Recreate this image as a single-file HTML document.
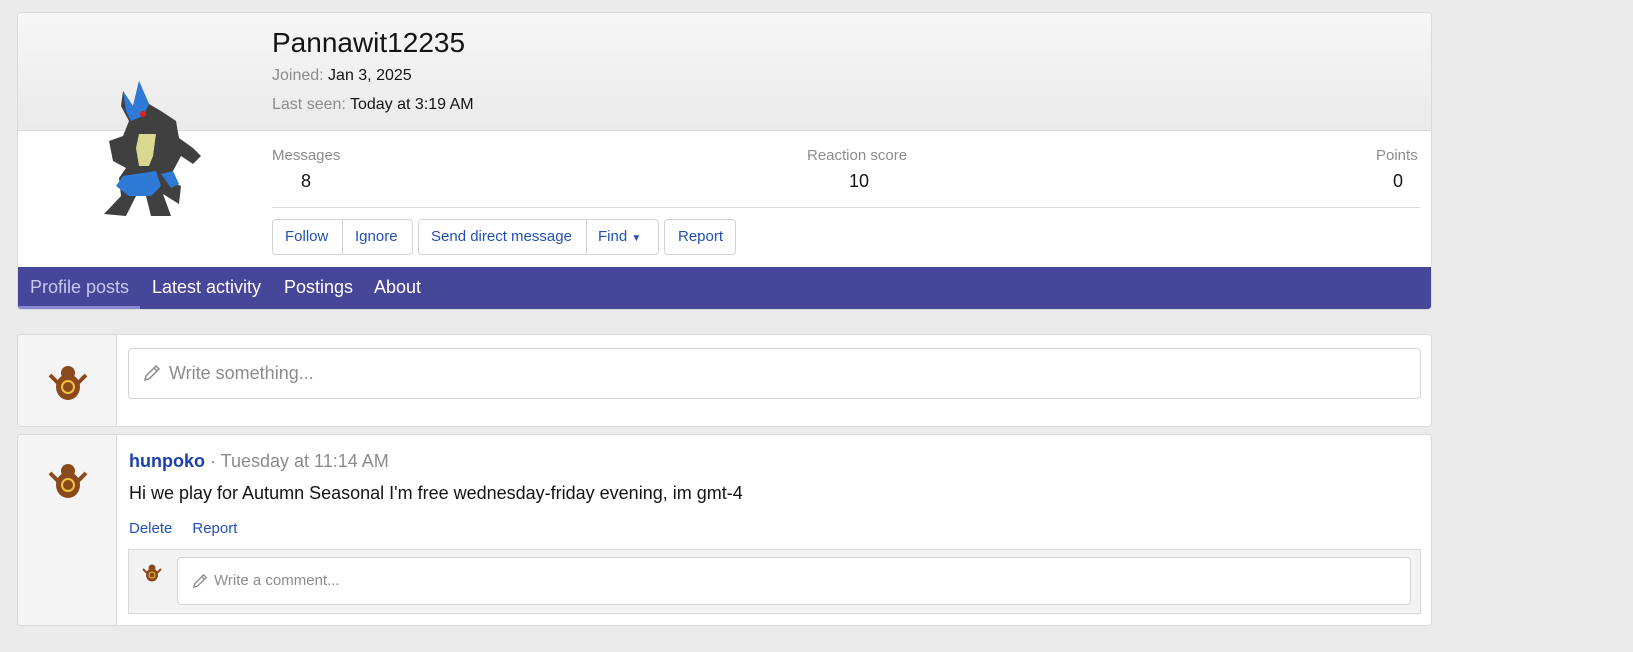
<!DOCTYPE html>
<html><head><meta charset="utf-8"><style>
*{box-sizing:border-box;margin:0;padding:0}
body{width:1633px;height:652px;background:#ebebeb;font-family:"Liberation Sans",sans-serif;position:relative;overflow:hidden;color:#141414}
.abs{position:absolute}
.card{position:absolute;left:17px;width:1415px;background:#fff;border:1px solid #dadada;border-radius:4px;overflow:hidden}
.hdr{position:absolute;left:0;top:0;width:100%;height:118px;background:linear-gradient(#f7f7f7,#eaeaea);border-bottom:1px solid #dcdcdc}
.muted{color:#8c8c8c}
.btn{position:absolute;top:219px;height:36px;border:1px solid #d3d3d3;border-radius:4px;background:#fff;color:#2150b8;font-size:15px;line-height:34px}
.btn span{position:absolute;top:0}
.nav{position:absolute;left:0;top:254px;width:100%;height:43px;background:#47479a}
.nav div{position:absolute;top:10px;color:#fff;font-size:18px}
.side{position:absolute;left:0;top:0;width:99px;height:100%;background:#f5f5f5;border-right:1px solid #dadada}
.input{position:absolute;border:1px solid #d3d3d3;border-radius:4px;background:#fff;color:#8c8c8c}
a{color:#2150b8;text-decoration:none}
</style></head><body>
<div class="card" style="top:12px;height:298px">
 <div class="hdr"></div>
 <svg class="abs" style="left:83px;top:63px" width="110" height="145" viewBox="0 0 110 145">
  <polygon points="22,15 32,30 38,5 48,28 60,35 75,45 78,62 92,72 100,80 92,88 80,80 72,95 68,105 80,110 78,128 62,118 70,140 50,140 45,120 35,120 25,140 3,138 20,120 18,102 25,92 12,85 8,65 22,60 28,45 20,30" fill="#404040"/>
  <polygon points="22,15 32,30 38,5 48,28 42,40 30,45 25,35" fill="#2e7ad6"/>
  <polygon points="22,100 55,95 60,110 50,120 28,120 15,110" fill="#2e7ad6"/>
  <polygon points="60,98 72,95 78,108 70,112" fill="#2e7ad6"/>
  <polygon points="38,58 55,58 52,80 48,90 38,90 35,72" fill="#d8d890"/>
  <circle cx="42" cy="38" r="3" fill="#e02020"/>
 </svg>
 <div class="abs" style="left:254px;top:14px;font-size:28px">Pannawit12235</div>
 <div class="abs" style="left:254px;top:54px;font-size:16px"><span class="muted">Joined:</span> Jan 3, 2025</div>
 <div class="abs" style="left:254px;top:83px;font-size:16px"><span class="muted">Last seen:</span> Today at 3:19 AM</div>
 <div class="abs muted" style="left:254px;top:134px;font-size:15px">Messages</div>
 <div class="abs" style="left:283px;top:158px;font-size:18px">8</div>
 <div class="abs muted" style="left:789px;top:134px;font-size:15px">Reaction score</div>
 <div class="abs" style="left:831px;top:158px;font-size:18px">10</div>
 <div class="abs muted" style="left:1358px;top:134px;font-size:15px">Points</div>
 <div class="abs" style="left:1375px;top:158px;font-size:18px">0</div>
 <div class="abs" style="left:254px;top:194px;width:1148px;height:1px;background:#dcdcdc"></div>
 <div class="btn" style="left:254px;top:206px;width:141px"><span style="left:12px">Follow</span><div class="abs" style="left:69px;top:0;width:1px;height:34px;background:#d3d3d3"></div><span style="left:82px">Ignore</span></div>
 <div class="btn" style="left:400px;top:206px;width:241px"><span style="left:12px">Send direct message</span><div class="abs" style="left:167px;top:0;width:1px;height:34px;background:#d3d3d3"></div><span style="left:179px">Find <span style="position:static;font-size:10px">&#9660;</span></span></div>
 <div class="btn" style="left:646px;top:206px;width:72px"><span style="left:13px">Report</span></div>
 <div class="nav">
  <div style="left:12px;color:#c8c8ee">Profile posts</div>
  <div class="abs" style="left:0;top:39px;width:122px;height:4px;background:#8a8ad0"></div>
  <div style="left:134px">Latest activity</div>
  <div style="left:266px">Postings</div>
  <div style="left:356px">About</div>
 </div>
</div>

<div class="card" style="top:334px;height:93px">
 <div class="side"></div>
 <svg class="abs" style="left:28px;top:28px" width="44" height="40" viewBox="0 0 44 40"><ellipse cx="22" cy="24" rx="12" ry="13" fill="#8b4a1c"/><circle cx="22" cy="10" r="7" fill="#8b4a1c"/><circle cx="22" cy="24" r="6" fill="none" stroke="#f0c040" stroke-width="2"/><path d="M4,12 L12,20 M40,12 L32,20" stroke="#8b4a1c" stroke-width="4"/></svg>
 <div class="input" style="left:110px;top:13px;width:1293px;height:51px;font-size:18px;line-height:49px;padding-left:40px">Write something...
  <svg class="abs" style="left:14px;top:15px" width="18" height="18" viewBox="0 0 18 18"><path d="M2,16 L3,12 L13,2 L16,5 L6,15 Z M11,4 L14,7" fill="none" stroke="#8c8c8c" stroke-width="1.5"/></svg></div>
</div>

<div class="card" style="top:434px;height:192px">
 <div class="side"></div>
 <svg class="abs" style="left:28px;top:26px" width="44" height="40" viewBox="0 0 44 40"><ellipse cx="22" cy="24" rx="12" ry="13" fill="#8b4a1c"/><circle cx="22" cy="10" r="7" fill="#8b4a1c"/><circle cx="22" cy="24" r="6" fill="none" stroke="#f0c040" stroke-width="2"/><path d="M4,12 L12,20 M40,12 L32,20" stroke="#8b4a1c" stroke-width="4"/></svg>
 <div class="abs" style="left:111px;top:16px;font-size:18px"><a style="font-weight:bold;color:#1a3fb0">hunpoko</a> <span class="muted">· Tuesday at 11:14 AM</span></div>
 <div class="abs" style="left:111px;top:48px;font-size:18px">Hi we play for Autumn Seasonal I'm free wednesday-friday evening, im gmt-4</div>
 <div class="abs" style="left:111px;top:85px;font-size:15px"><a>Delete</a><a style="margin-left:20px">Report</a></div>
 <div class="abs" style="left:110px;top:114px;width:1293px;height:65px;background:#f3f3f3;border:1px solid #dadada">
  <svg class="abs" style="left:12px;top:13px" width="22" height="20" viewBox="0 0 44 40"><ellipse cx="22" cy="24" rx="12" ry="13" fill="#8b4a1c"/><circle cx="22" cy="10" r="7" fill="#8b4a1c"/><circle cx="22" cy="24" r="6" fill="none" stroke="#f0c040" stroke-width="2"/><path d="M4,12 L12,20 M40,12 L32,20" stroke="#8b4a1c" stroke-width="4"/></svg>
  <div class="input" style="left:48px;top:7px;width:1234px;height:48px;font-size:15px;line-height:46px;padding-left:36px">Write a comment...
   <svg class="abs" style="left:14px;top:15px" width="16" height="16" viewBox="0 0 18 18"><path d="M2,16 L3,12 L13,2 L16,5 L6,15 Z M11,4 L14,7" fill="none" stroke="#8c8c8c" stroke-width="1.5"/></svg></div>
 </div>
</div>
</body></html>
